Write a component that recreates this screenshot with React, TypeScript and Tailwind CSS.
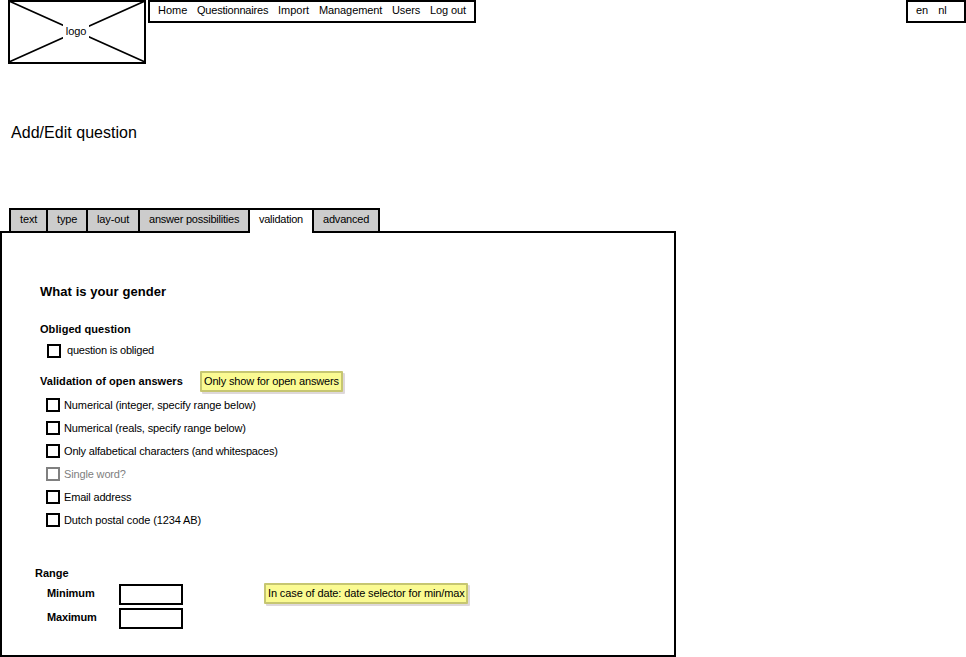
import React from "react";

const nav = [
  { label: "Home", w: "w-[39px]" },
  { label: "Questionnaires", w: "w-[81px] tracking-[-0.2px]" },
  { label: "Import", w: "w-[41px]" },
  { label: "Management", w: "w-[73px] tracking-[-0.1px]" },
  { label: "Users", w: "w-[38px] tracking-[-0.1px]" },
  { label: "Log out", w: "w-[36px] tracking-[-0.1px]" },
];

const tabs = [
  { label: "text", w: "w-[39px] tracking-[-0.1px]" },
  { label: "type", w: "w-[42px] tracking-[-0.1px]" },
  { label: "lay-out", w: "w-[54px] tracking-[-0.1px]" },
  { label: "answer possibilities", w: "w-[112px] tracking-[-0.23px]" },
  { label: "validation", w: "w-[66px] tracking-[-0.25px]", active: true },
  { label: "advanced", w: "w-[68px] tracking-[-0.2px]" },
];

const options = [
  { label: "Numerical (integer, specify range below)", tracking: "tracking-[-0.11px]" },
  { label: "Numerical (reals, specify range below)", tracking: "tracking-[-0.14px]" },
  { label: "Only alfabetical characters (and whitespaces)", tracking: "tracking-[-0.18px]" },
  { label: "Single word?", tracking: "tracking-[-0.15px]", disabled: true },
  { label: "Email address", tracking: "tracking-[-0.18px]" },
  { label: "Dutch postal code (1234 AB)", tracking: "tracking-[-0.11px]" },
];

function Box({ disabled, className = "" }: { disabled?: boolean; className?: string }) {
  return <span className={`size-3.5 shrink-0 border-2 bg-white ${disabled ? "border-[#808080]" : "border-black"} ${className}`} />;
}

function Note({ children, className }: { children: React.ReactNode; className: string }) {
  return (
    <div className={`h-[21px] whitespace-nowrap rounded-[1px] border-2 border-[#c6c671] bg-[#fafa92] pl-[2px] pt-[1px] shadow-[2px_2px_0_#ded8da] ${className}`}>
      {children}
    </div>
  );
}

export default function App() {
  return (
    <div className="h-[657px] w-[966px] overflow-hidden bg-white font-['Liberation_Sans',Arial,sans-serif] text-[11px] leading-[14px] text-black">
      <header className="flex h-16 items-start pl-2">
        <svg width="138" height="64" viewBox="0 0 138 64" className="shrink-0">
          <rect x="1" y="1" width="136" height="62" fill="white" stroke="black" strokeWidth="2" />
          <path d="M1 1L137 62M137 1L1 62" stroke="black" strokeWidth="1.8" />
          <rect x="55" y="22" width="26" height="18" fill="white" />
          <text x="68" y="35" textAnchor="middle" fontSize="11" letterSpacing="-0.1">logo</text>
        </svg>
        <nav className="ml-[2px] flex h-[23px] w-[328px] border-2 border-black pl-2 pt-[1px]">
          {nav.map((n) => (
            <a key={n.label} className={`shrink-0 whitespace-nowrap ${n.w}`}>{n.label}</a>
          ))}
        </nav>
        <div className="ml-auto flex h-[23px] w-[60px] gap-2.5 border-2 border-black pl-2 pt-[1px]">
          <a>en</a>
          <a>nl</a>
        </div>
      </header>
      <h1 className="ml-[11px] mt-[59px] h-5 text-[16px] leading-5 tracking-[0.03px]">Add/Edit question</h1>
      <div className="ml-[9px] mt-[65px] flex h-[25px]">
        {tabs.map((t, i) => (
          <div
            key={t.label}
            className={`shrink-0 whitespace-nowrap border-2 border-black pl-[9px] pt-[2px] ${i > 0 ? "-ml-[2px]" : ""} ${t.w} ${t.active ? "relative border-b-0 bg-white" : "bg-[#cccccc]"}`}
          >
            {t.label}
          </div>
        ))}
      </div>
      <main className="-mt-[2px] h-[426px] w-[676px] border-2 border-black pt-[50px]">
        <h2 className="ml-[38px] h-[18px] text-[13px] font-bold leading-[18px] tracking-[0.06px]">What is your gender</h2>
        <h3 className="ml-[38px] mt-[21px] font-bold tracking-[0.06px]">Obliged question</h3>
        <label className="ml-[45px] mt-[7px] flex h-[14px] items-start gap-1.5 tracking-[-0.22px]">
          <Box className="mt-[1px]" />
          question is obliged
        </label>
        <div className="ml-[38px] mt-[14px] flex h-[21px] items-start">
          <h3 className="mt-[3px] w-40 font-bold tracking-[0.04px]">Validation of open answers</h3>
          <Note className="w-[143px] tracking-[-0.15px]">Only show for open answers</Note>
        </div>
        <div className="ml-[44px] mt-[6px] flex flex-col gap-[9px]">
          {options.map((o) => (
            <label key={o.label} className={`flex h-[14px] items-center gap-1 ${o.tracking} ${o.disabled ? "text-[#808080]" : ""}`}>
              <Box disabled={o.disabled} />
              {o.label}
            </label>
          ))}
        </div>
        <h3 className="ml-[33px] mt-[39px] font-bold">Range</h3>
        <div className="ml-[45px] mt-[3px] flex items-start">
          <span className="mt-[3px] w-[72px] font-bold tracking-[-0.1px]">Minimum</span>
          <input className="mt-[1px] h-[21px] w-16 border-2 border-black" />
          <Note className="ml-[81px] w-[204px] tracking-[-0.12px]">In case of date: date selector for min/max</Note>
        </div>
        <div className="ml-[45px] mt-[3px] flex items-start">
          <span className="mt-[2px] w-[72px] font-bold tracking-[-0.15px]">Maximum</span>
          <input className="h-[21px] w-16 border-2 border-black" />
        </div>
      </main>
    </div>
  );
}
